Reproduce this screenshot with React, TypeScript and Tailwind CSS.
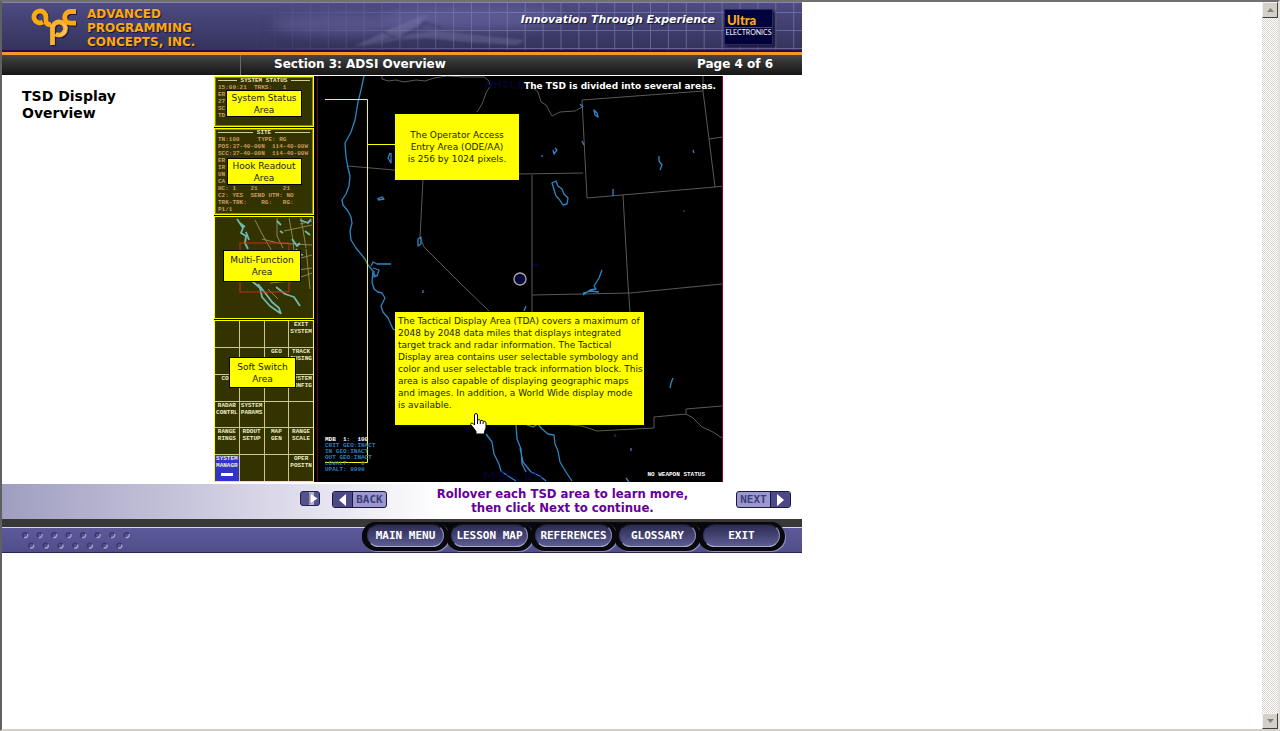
import type { ReactNode } from "react";

const SWITCHES = [
  "", "", "", "EXIT\nSYSTEM",
  "", "", "GEO", "TRACK\nFUSING",
  "COM", "", "", "SYSTEM\nCONFIG",
  "RADAR\nCONTRL", "SYSTEM\nPARAMS", "", "",
  "RANGE\nRINGS", "RDOUT\nSETUP", "MAP\nGEN", "RANGE\nSCALE",
  "SYSTEM\nMANAGR", "", "", "OPER\nPOSITN",
];

const MENU = ["MAIN MENU", "LESSON MAP", "REFERENCES", "GLOSSARY", "EXIT"];

function Logo() {
  return (
    <svg viewBox="0 0 46 40" className="h-10 w-[46px] shrink-0" aria-hidden="true">
      <g fill="none" strokeWidth="4.800">
        <g stroke="#1e1b45" transform="translate(1.2 1.2)">
          <circle cx="9" cy="9.500" r="5.800" />
          <path d="M21.500 38V21" />
          <circle cx="28" cy="21.500" r="6.500" />
          <path d="M45 4.500H39.500a5.800 5.800 0 0 0 0 11.600H45" />
        </g>
        <path d="M12 15.200A6 6 0 1 1 15 10.500V14q0 3.600 5 3.800" stroke="#fbaa12" />
        <path d="M21.500 38V21.500A6.500 6.500 0 1 1 24.500 27" stroke="#f9b32e" />
        <path d="M45 4.500H39.500a5.800 5.800 0 0 0 0 11.600H45" stroke="#fbaa12" />
        <path d="M32.500 17.500a6 6 0 0 1-4 10.500" stroke="#fbc870" strokeWidth="1.500" />
      </g>
    </svg>
  );
}

function HeaderArt() {
  return (
    <svg viewBox="0 0 800 49" preserveAspectRatio="xMaxYMid slice" className="absolute inset-0 h-full w-full" aria-hidden="true">
      <defs>
        <linearGradient id="fade" x1="0" x2="1" y1="0" y2="0">
          <stop offset="0" stopColor="#fff" stopOpacity="0" />
          <stop offset="0.5" stopColor="#fff" stopOpacity="1" />
        </linearGradient>
        <mask id="gridMask"><rect x="230" width="570" height="49" fill="url(#fade)" /></mask>
        <filter id="soft" x="-30%" y="-60%" width="160%" height="220%"><feGaussianBlur stdDeviation="6" /></filter>
        <filter id="slight"><feGaussianBlur stdDeviation="1" /></filter>
        <pattern id="cells" width="17.9" height="18" patternUnits="userSpaceOnUse" x="469" y="10">
          <path d="M.5 0V18M0 .5H18" stroke="#8b8bb8" strokeOpacity=".55" fill="none" />
        </pattern>
      </defs>
      <ellipse cx="340" cy="22" rx="70" ry="10" fill="#6a68a4" opacity=".5" filter="url(#soft)" />
      <ellipse cx="470" cy="16" rx="90" ry="12" fill="#6a68a4" opacity=".6" filter="url(#soft)" />
      <g filter="url(#slight)">
        <path d="M352 44l24-11 8-4 30-13 12-3-12 12-16 8 36-4 50 5 40 4-10 5-50-3-40-4-30 2-16 4z" fill="#8b8ab5" opacity=".3" />
        <path d="M396 38l30-18M380 30l14 5-26 8M420 20l20 6" stroke="#34325f" strokeWidth="2" opacity=".5" fill="none" />
      </g>
      <rect x="230" width="570" height="49" fill="url(#cells)" mask="url(#gridMask)" />
    </svg>
  );
}

function AreaLabel({ name, size }: { name: string; size: string }) {
  return (
    <button type="button" className={`relative border border-black bg-[#ffff00] text-center text-[9px] leading-[12px] text-[#222200] ${size}`}>
      {name}
      <br />
      Area
    </button>
  );
}

function Readout({ children, lines, title }: { children: ReactNode; lines: string[]; title: string }) {
  return (
    <section className="relative flex flex-col items-center justify-center overflow-hidden border border-[#ffff00] bg-[#333300] outline outline-1 -outline-offset-2 outline-[#8a8a00]">
      <div className="absolute inset-x-0 top-0 px-[3px] font-['Liberation_Mono',monospace] text-[6px] leading-[7px] font-bold text-[#c99b62]">
        <div className="flex items-center gap-1 text-[#f0e8c0]">
          <span className="h-px flex-1 bg-[#cfcfa0]" />
          <span>{title}</span>
          <span className="h-px flex-1 bg-[#cfcfa0]" />
        </div>
        {lines.map((line) => (
          <div key={line} className="w-fit whitespace-pre">{line}</div>
        ))}
      </div>
      {children}
    </section>
  );
}

function MultiMap() {
  return (
    <svg viewBox="215 218 98 101" className="absolute inset-0 h-full w-full" aria-hidden="true" fill="none">
      <path d="M255 221l6 12 8 14 3 5M277 219v18l6 12M262 240l16 4 34 2M289 219l4 22 3 40M300 225l12-3M270 284l20-2 22-8M284 232l28-6M301 219l5 30M290 262l22-6M291 272l21-3M268 290l10 10M306 250l4 40" stroke="#8d8558" />
      <path d="M237 220l6 9-2 5 5 3-1 7 3 6M240 224l5 4M246 233l3 8M252 282l8 7 2 9 8 9 10 7M258 285l8 10 6 8 7 6 2 6M277 222l4 4M292 240l5 7 3-3M300 221l8 3 3-4M280 232l3 2M305 232l5 4M296 250l3 5 4 1M276 288l9 7 9 3 6 9" stroke="#6fb9b0" strokeWidth="1.8" strokeLinejoin="round" />
      <rect x="240" y="244" width="49" height="49" stroke="#c2331c" />
    </svg>
  );
}

function TacticalMap() {
  return (
    <svg viewBox="317 76 406 406" className="absolute inset-0 h-full w-full" aria-hidden="true" fill="none">
      <g stroke="#595959">
        <path d="M382 76v3l6 2 8-1 8 2 12-2 9 1 9-3 13-2 18 1 19 0 5 4 1 5-4 7-4 11-5 8" />
        <path d="M348 166l46 4 60 5 65-1 64-1M423 180l-3 57 4 10 37 37 28 27M533 88l5 4 3 10 5 3 6 11 8-4 15-1 7-4" />
        <path d="M582 100l121-9 12 96-128 11zM703 76v15M709 139l14-2M715 187l8-1M532 175v137M623 195l5 89 2 28M532 295l98-2 92-9" />
        <path d="M570 425l12 1 15 5 57-3v-11l32-3v-5l36-3M686 414l7 4 9 9 11 5 9 6" />
      </g>
      <g stroke="#2e86c4" strokeWidth="1.3" strokeLinejoin="round">
        <path d="M364 76l-3 14-3 12-3 18-4 12-6 11 1 14 2 11 2 8-1 10-3 8-4 6 1 5 5 6 3 6 1 6-2 8 1 9 5 8 9 11 3 6 5 6-1 11 2 7 4 3 4 1 3 5-4 8 2 6 5 6 5 11 4 2" />
        <path d="M371 266l2-4 4 2h14M373 268l6 2-2 6-4-2M374 271v6l4-2" />
        <path d="M486 434l6 8 2 12 5 10 2 7 7 5 8 5M516 424l1 15 4 10 1 15 4 8M520 448l3 14 8 10 9 4 6 5M527 425l6 2 5-3 4 5 6 5 6 1 1 9 3 7 2 11 6 10 6 9" />
        <path d="M390 153l-2 5 3 5v-10M377 199l5-2 2 2-6 1M418 239l3-2v7l-3 2zM552 183l4-2 2 5 4 3 2 5 4 4-1 6-4 1-4-6-3-3zM555 148l2 2-3 4-1-4M580 104l3 3M594 110l3 3 1 4-3-2zM582 141l2 4M659 156v5l3 4-2 5M693 150l1 3M613 189v7M602 270l-3 8-5 8 2 3-6 1-7 5M583 293l7-2 9 1M526 306l-2 5M673 378l-2 5-1 5M631 448v3M423 290v3M626 478l3 4M542 155v2" />
      </g>
      <path d="M533 265h5" stroke="#070770" />
      <path d="M684 210v2" stroke="#3d5c3d" />
      <path d="M615 434v3" stroke="#86108c" />
      <circle cx="520" cy="279" r="6" fill="#09093f" stroke="#a5a5a5" strokeWidth="1.400" />
      <path d="M317.500 76V482" stroke="#6b0028" />
      <path d="M722.500 76V482" stroke="#8c0038" />
      <path d="M325 99.500H367.500V462.500H325M367.500 144.500H395" stroke="#ffff00" />
      <path d="M485 88l3-7 2 7 3-7M495 81v7M495 84h5M500 81v7M508 82h-4v5h4M511 81v7h5M519 81v7h4v-7" stroke="#04044e" />
      <path d="M485 480v-8l4 5 4-5v8M504 472h-5v4h5v4h-5M512 472h-5v8h5M516 472v8h6M526 472v8h5v-8M535 472h6v8h-6z" stroke="#04044e" />
    </svg>
  );
}

function PointerHand() {
  return (
    <svg viewBox="0 0 17 22" className="absolute top-[337px] left-[153px] h-[22px] w-[17px]" aria-hidden="true">
      <path d="M4.500 12V2q.2-1.500 1.500-1.500T7.500 2v5q2-1 2.800.6 2-.8 2.800.7 2-.5 2.900 1.200V15l-1.500 3.500V21H6v-2.500L3.500 15 .6 11.500q.4-2 2.200-1.200z" fill="#fff" stroke="#000" />
      <path d="M7.500 7v4M10.300 8v3M13.100 9v2" stroke="#000" />
    </svg>
  );
}

function Stage() {
  return (
    <div className="flex h-[406px] w-[509px] bg-black">
      <div className="grid w-[100px] shrink-0 grid-rows-[51px_87px_103px_1fr] gap-y-px bg-black">
        <Readout title="SYSTEM STATUS" lines={["15:09:21  TRKS:   1", "ER", "27", "SC", "TD"]}>
          <AreaLabel name="System Status" size="mt-1 h-[27px] w-[76px]" />
        </Readout>
        <Readout
          title="SITE"
          lines={[
            "TN:100     TYPE: RG",
            "POS:37-40-00N  114-40-00W",
            "SCC:37-40-00N  114-40-00W",
            "ER",
            "IR",
            "UN",
            "CA",
            "HC: 1    21       21",
            "C2: YES  SEND UTM: NO",
            "TRK-TRK:    RG:   RG:",
            "P1/1",
          ]}
        >
          <AreaLabel name="Hook Readout" size="h-[27px] w-[75px]" />
        </Readout>
        <section className="relative flex items-center justify-center border border-[#ffff00] bg-[#333300] pr-1 pb-1">
          <MultiMap />
          <AreaLabel name="Multi-Function" size="h-8 w-[78px]" />
        </section>
        <section className="relative border border-[#ffff00] bg-[#333300]">
          <div className="grid h-full grid-cols-4 grid-rows-6 gap-px bg-[#c9c98a]">
            {SWITCHES.map((text, i) => (
              <div key={i} className={`overflow-hidden text-center font-['Liberation_Mono',monospace] text-[6px] leading-[7px] font-bold whitespace-pre text-[#ececc8] ${i === 20 ? "bg-[#3333cc]" : "bg-[#333300]"}`}>
                {text}
                {i === 20 && <span className="mx-auto mt-1 block h-[3px] w-3 bg-white" />}
              </div>
            ))}
          </div>
          <div className="absolute top-9 left-[14px]">
            <AreaLabel name="Soft Switch" size="h-[31px] w-[67px]" />
          </div>
        </section>
      </div>
      <div className="relative ml-[3px] flex-1 overflow-hidden">
        <TacticalMap />
        <p className="absolute top-[3px] right-[7px] text-[9px] leading-[14px] font-bold whitespace-nowrap text-white">The TSD is divided into several areas.</p>
        <pre className="absolute top-[361px] left-2 font-['Liberation_Mono',monospace] text-[6px] leading-[6px] font-bold text-[#2f7cba]">
          <span className="text-white">MDB  1:  100</span>
          {"\nCRIT GEO:INACT\nIN GEO:INACT\nOUT GEO:INACT\nLOWALT:   0\nUPALT: 9999"}
        </pre>
        <p className="absolute right-[18px] bottom-[3px] font-['Liberation_Mono',monospace] text-[6px] leading-[8px] font-bold text-white">NO WEAPON STATUS</p>
        <p className="absolute top-[38px] left-[78px] flex h-[66px] w-[124px] items-center justify-center bg-[#ffff00] text-center text-[9px] leading-[12px] whitespace-nowrap text-[#222200]">
          The Operator Access
          <br />
          Entry Area (ODE/AA)
          <br />
          is 256 by 1024 pixels.
        </p>
        <p className="absolute top-[236px] left-[78px] h-[113px] w-[249px] bg-[#ffff00] px-[3px] pt-[3px] text-[9px] leading-[12px] whitespace-nowrap text-[#222200]">
          The Tactical Display Area (TDA) covers a maximum of<br />
          2048 by 2048 data miles that displays integrated<br />
          target track and radar information. The Tactical<br />
          Display area contains user selectable symbology and<br />
          color and user selectable track information block. This<br />
          area is also capable of displaying geographic maps<br />
          and images. In addition, a World Wide display mode<br />
          is available.
        </p>
        <PointerHand />
      </div>
    </div>
  );
}

function Triangle({ flip = false }: { flip?: boolean }) {
  return (
    <span className="flex w-[19px] items-center justify-center bg-[#4c4a86]">
      <svg viewBox="0 0 8 14" className={`h-[14px] w-[7px] ${flip ? "rotate-180" : ""}`} aria-hidden="true">
        <path d="M0 0L8 7L0 14z" fill="#fff" />
      </svg>
    </span>
  );
}

function ScrollButton({ down = false }: { down?: boolean }) {
  return (
    <button type="button" aria-label={down ? "Scroll down" : "Scroll up"} className="flex h-4 w-4 items-center justify-center border border-t-[#f4f2ec] border-r-[#404040] border-b-[#404040] border-l-[#f4f2ec] bg-[#d4d0c8]">
      <svg viewBox="0 0 7 4" className={`h-1 w-[7px] ${down ? "rotate-180" : ""}`} aria-hidden="true">
        <path d="M3.500 0L7 4H0z" fill="#808080" />
      </svg>
    </button>
  );
}

export default function App() {
  return (
    <div className="flex h-screen overflow-hidden border-t-2 border-r-2 border-b-2 border-l-2 border-t-[#707070] border-r-[#e4e1da] border-b-[#d4d0c8] border-l-[#606060] bg-white font-['DejaVu_Sans',sans-serif]">
      <div className="min-w-0 flex-1">
        <div className="w-full max-w-[800px]">
          <header className="relative flex h-[50px] items-start overflow-hidden border-t border-b-2 border-t-[#8583b0] border-b-[#2b0a4a] bg-linear-to-b from-[#4d4b82] to-[#34335c] pr-[29px] pl-[29px]">
            <HeaderArt />
            <div className="relative flex flex-1 items-start gap-[10px] pt-[4px]">
              <Logo />
              <h1 className="text-[12px] leading-[14px] font-bold text-[#fbaa12] [text-shadow:1px_1px_1px_#151230]">
                ADVANCED<br />PROGRAMMING<br />CONCEPTS, INC.
              </h1>
            </div>
            <p className="relative mr-[9px] pt-[9px] text-[11px] leading-[16px] font-bold whitespace-nowrap text-white italic [text-shadow:1px_1px_1px_#151230]">Innovation Through Experience</p>
            <div className="relative mt-[6px] flex h-[36px] w-[49px] flex-col border border-[#282864] bg-[#03033c] pt-1 shadow-[2px_2px_2px_#1a1838]">
              <span className="border-b border-[#4a4a78] pl-[2px] font-['Lato',sans-serif] text-[13px] leading-[13px] font-black text-[#fbaa12]">Ultra</span>
              <span className="text-center font-['Lato',sans-serif] text-[7px] leading-[9px] text-white">ELECTRONICS</span>
            </div>
          </header>
          <div className="flex h-[24px] items-center border-t-3 border-b border-t-[#f7942a] border-b-white bg-linear-to-b from-[#454545] to-[#161616] pr-[29px] text-[12px] leading-[16px] font-bold text-white">
            <span className="h-full w-[239px] shrink-0 border-r border-[#6a6a6a]" />
            <h2 className="flex-1 pb-[3px] pl-[33px]">Section 3: ADSI Overview</h2>
            <span className="pb-[3px]">Page 4 of 6</span>
          </div>
          <main className="flex h-[408px] items-start">
            <h3 className="w-[212px] shrink-0 pt-3 pl-5 text-[14px] leading-[17px] font-bold text-black">
              TSD Display<br />Overview
            </h3>
            <Stage />
          </main>
          <div className="flex h-[35px] items-start bg-linear-to-r from-[#a09ec0] via-[#dcdaea] via-35% to-white to-55% pr-[11px] pl-[298px]">
            <button type="button" aria-label="Play" className="mt-[7px] flex h-[15px] w-[20px] items-center justify-end rounded-[3px] border border-[#22204a] bg-[#54528f] pr-px">
              <svg viewBox="0 0 9 13" className="h-[13px] w-[9px]" aria-hidden="true">
                <path d="M0 0h5v13H0z" fill="#b5b5c6" />
                <path d="M1 1.500L8.500 6.500 1 11.500z" fill="#fff" />
                <path d="M1 1v11" stroke="#77759c" />
              </svg>
            </button>
            <button type="button" className="mt-[7px] ml-3 flex h-[17px] w-[55px] overflow-hidden rounded-[3px] border border-[#19173d] bg-[#9a98cf] font-['DejaVu_Sans_Mono',monospace] text-[11px] leading-[15px] font-bold text-[#3f3d78]">
              <Triangle flip />
              <span className="flex-1 border-l border-[#19173d]">BACK</span>
            </button>
            <p className="flex-1 pt-[3px] pl-[2px] text-center font-['DejaVu_Sans_Condensed','DejaVu_Sans',sans-serif] text-[13px] leading-[14px] font-bold text-[#660099]">
              Rollover each TSD area to learn more,<br />then click Next to continue.
            </p>
            <button type="button" className="mt-[7px] flex h-[17px] w-[55px] overflow-hidden rounded-[3px] border border-[#19173d] bg-[#9a98cf] font-['DejaVu_Sans_Mono',monospace] text-[11px] leading-[15px] font-bold text-[#3f3d78]">
              <span className="flex-1 border-r border-[#19173d]">NEXT</span>
              <Triangle />
            </button>
          </div>
          <footer className="relative bg-[#383838] pt-2">
            <div className="h-[26px] border-t border-b border-t-[#d6d4ec] border-b-[#29264f] bg-linear-to-b from-[#5d5a9b] to-[#504d8b]">
              <svg viewBox="0 0 110 22" className="ml-[18px] h-[22px] w-[110px]" aria-hidden="true">
                {Array.from({ length: 15 }, (_, i) => {
                  const x = i < 8 ? 5 + i * 14.5 : 11 + (i - 8) * 14.7;
                  const y = i < 8 ? 7 : 17.5;
                  return (
                    <g key={i} fill="none" strokeWidth="1.500">
                      <circle cx={x} cy={y} r="2.300" fill="#56538f" stroke="#3c3970" />
                      <path d={`M${x - 1} ${y + 2.5}Q${x + 3} ${y + 3} ${x + 2.6} ${y - 1}`} stroke="#a3a1cc" />
                    </g>
                  );
                })}
              </svg>
            </div>
            <nav className="absolute top-[3px] right-[17px] flex rounded-[14px] bg-linear-to-b from-[#08080c] from-75% to-transparent to-75%">
              {MENU.map((name) => (
                <span key={name} className="-mr-[3px] flex rounded-full bg-[#08080c] px-[5px] pt-[2px] pb-[4px] shadow-[1px_1px_0_#8f8dc0] last:mr-0">
                  <button
                    type="button"
                    className="h-[23px] w-[77px] rounded-full border border-t-[#17172c] border-r-[#8d8db8] border-b-[#a9a9cc] border-l-[#34345c] bg-linear-to-b from-[#2c2c52] to-[#5c5c94] text-center font-['DejaVu_Sans_Mono',monospace] text-[11px] leading-[20px] font-bold whitespace-nowrap text-white"
                  >
                    {name}
                  </button>
                </span>
              ))}
            </nav>
          </footer>
        </div>
      </div>
      <div className="flex w-4 shrink-0 flex-col justify-between bg-[repeating-conic-gradient(#ffffff_0_25%,#d9d6cf_0_50%)] bg-size-[2px_2px]">
        <ScrollButton />
        <ScrollButton down />
      </div>
    </div>
  );
}
